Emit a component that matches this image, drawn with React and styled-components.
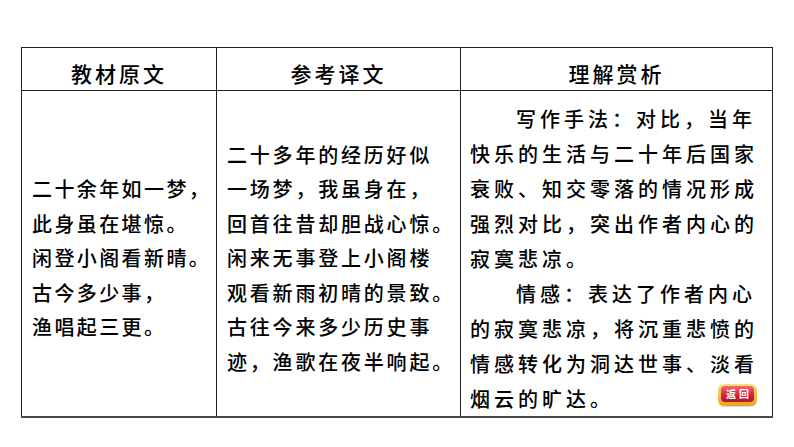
import React from 'react';
import styled, { createGlobalStyle } from 'styled-components';

const GlobalStyle = createGlobalStyle`
  html, body {
    margin: 0;
    padding: 0;
    background: #ffffff;
  }
  body {
    font-family: "Noto Sans CJK SC", "Noto Sans", sans-serif;
    color: #000;
  }
`;

const Page = styled.div`
  width: 794px;
  height: 447px;
  padding: 47px 0 0 21px;
  box-sizing: border-box;
`;

const Frame = styled.div`
  position: relative;
  width: 751px;
`;

const Table = styled.table`
  width: 751px;
  border-collapse: collapse;
  table-layout: fixed;
  border-bottom: 2.5px solid #4a4a4a;
`;

const HeadCell = styled.th`
  height: 43px;
  padding: 8px 0 0 0;
  box-sizing: border-box;
  border: 1.5px solid #222;
  font-size: 21px;
  font-weight: 500;
  letter-spacing: 3px;
  text-align: center;
  vertical-align: middle;
  line-height: 30px;
`;

const BodyCell = styled.td`
  height: 322px;
  padding: 10px 0 0 ${p => p.$pad}px;
  box-sizing: border-box;
  border: 1.5px solid #222;
  vertical-align: middle;
  font-size: 20px;
  font-weight: 500;
  letter-spacing: ${p => p.$spacing}px;
  line-height: ${p => p.$lh}px;
  white-space: nowrap;
`;

const Line = styled.div`
  padding-left: ${p => (p.$indent ? 46 : 0)}px;
`;

const BackButton = styled.div`
  position: absolute;
  right: 15px;
  bottom: 12px;
  width: 39px;
  height: 22px;
  box-sizing: border-box;
  padding: 2px 3px 4px 3px;
  border-radius: 6px;
  background: linear-gradient(#fbe07a, #e8a51c);
  box-shadow: 0 1px 1px rgba(0, 0, 0, 0.15);
`;

const BackFace = styled.div`
  height: 100%;
  border-radius: 4px;
  background: linear-gradient(#f26a78, #d41f3a 60%, #b8122c);
  color: #fff;
  font-size: 10px;
  line-height: 16px;
  letter-spacing: 3px;
  text-indent: 3px;
  text-align: center;
  font-weight: 700;
`;

const original = [
  '二十余年如一梦，',
  '此身虽在堪惊。',
  '闲登小阁看新晴。',
  '古今多少事，',
  '渔唱起三更。',
];

const translation = [
  '二十多年的经历好似',
  '一场梦，我虽身在，',
  '回首往昔却胆战心惊。',
  '闲来无事登上小阁楼',
  '观看新雨初晴的景致。',
  '古往今来多少历史事',
  '迹，渔歌在夜半响起。',
];

const analysis = [
  { text: '写作手法：对比，当年', indent: true },
  { text: '快乐的生活与二十年后国家' },
  { text: '衰败、知交零落的情况形成' },
  { text: '强烈对比，突出作者内心的' },
  { text: '寂寞悲凉。' },
  { text: '情感：表达了作者内心', indent: true },
  { text: '的寂寞悲凉，将沉重悲愤的' },
  { text: '情感转化为洞达世事、淡看' },
  { text: '烟云的旷达。' },
];

export default function App() {
  return (
    <>
      <GlobalStyle />
      <Page>
        <Frame>
          <Table>
            <colgroup>
              <col style={{ width: 195 }} />
              <col style={{ width: 244 }} />
              <col style={{ width: 312 }} />
            </colgroup>
            <thead>
              <tr>
                <HeadCell>教材原文</HeadCell>
                <HeadCell>参考译文</HeadCell>
                <HeadCell>理解赏析</HeadCell>
              </tr>
            </thead>
            <tbody>
              <tr>
                <BodyCell $pad={10} $spacing={2.4} $lh={34.5}>
                  {original.map((l, i) => <Line key={i}>{l}</Line>)}
                </BodyCell>
                <BodyCell $pad={10} $spacing={2.8} $lh={34.5}>
                  {translation.map((l, i) => <Line key={i}>{l}</Line>)}
                </BodyCell>
                <BodyCell $pad={9} $spacing={4} $lh={35}>
                  {analysis.map((l, i) => (
                    <Line key={i} $indent={l.indent}>{l.text}</Line>
                  ))}
                </BodyCell>
              </tr>
            </tbody>
          </Table>
          <BackButton>
            <BackFace>返回</BackFace>
          </BackButton>
        </Frame>
      </Page>
    </>
  );
}
